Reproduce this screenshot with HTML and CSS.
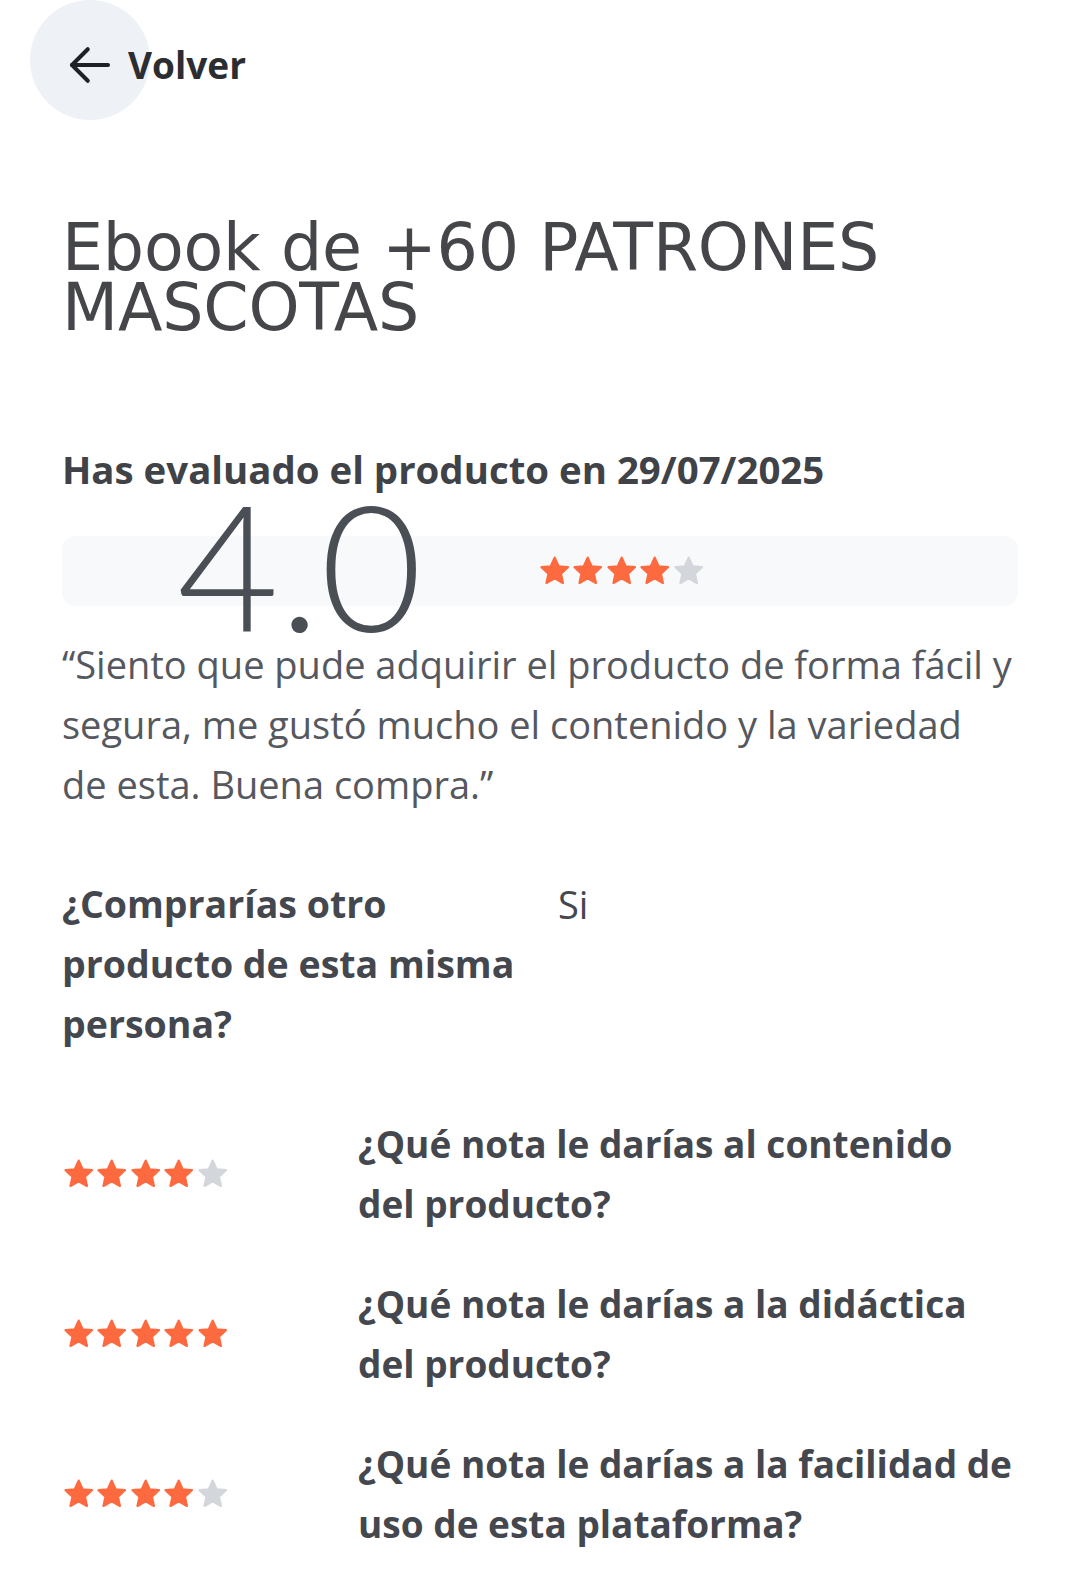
FILE: index.html
```html
<!DOCTYPE html>
<html lang="es">
<head>
<meta charset="utf-8">
<link rel="stylesheet" href="styles.css">
</head>
<body>
<div class="page">
  <a class="back" href="#">
    <span class="back-icon">
      <svg width="54" height="54" viewBox="0 0 24 24" fill="none" stroke="#1f2125" stroke-width="1.8" stroke-linecap="round" stroke-linejoin="round"><path d="M20 12H4"/><path d="M11 5l-7 7 7 7"/></svg>
    </span>
    <span class="back-label">Volver</span>
  </a>

  <h1 class="title">Ebook de +60 PATRONES MASCOTAS</h1>

  <h2 class="eval-date">Has evaluado el producto en 29/07/2025</h2>

  <div class="score-row">
    <div class="score-band"></div>
    <div class="score">4.0</div>
    <div class="stars stars-big" data-n="4"></div>
  </div>

  <p class="quote">“Siento que pude adquirir el producto de forma fácil y segura, me gustó mucho el contenido y la variedad<br>de esta. Buena compra.”</p>

  <div class="qa">
    <div class="qa-q">¿Comprarías otro producto de esta misma persona?</div>
    <div class="qa-a">Si</div>
  </div>

  <div class="rating">
    <div class="stars" data-n="4"></div>
    <div class="rating-q">¿Qué nota le darías al contenido<br>del producto?</div>
  </div>
  <div class="rating">
    <div class="stars" data-n="5"></div>
    <div class="rating-q">¿Qué nota le darías a la didáctica<br>del producto?</div>
  </div>
  <div class="rating">
    <div class="stars" data-n="4"></div>
    <div class="rating-q">¿Qué nota le darías a la facilidad de<br>uso de esta plataforma?</div>
  </div>
</div>
<script>
document.querySelectorAll('.stars').forEach(function (el) {
  var n = parseInt(el.getAttribute('data-n'), 10);
  var html = '';
  for (var i = 0; i < 5; i++) {
    html += '<svg class="star ' + (i < n ? 'on' : 'off') + '" viewBox="0 0 24 24"><path d="M12 2.6l2.8 6.2 6.7.7-5 4.6 1.4 6.7L12 17.4l-5.9 3.4 1.4-6.7-5-4.6 6.7-.7z"/></svg>';
  }
  el.innerHTML = html;
});
</script>
</body>
</html>
```

FILE: styles.css
```css
* { box-sizing: border-box; }
html, body { margin: 0; padding: 0; background: #ffffff; }
body {
  font-family: "Open Sans", "Lato", sans-serif;
  color: #44474d;
}
.page {
  padding: 0 62px 0 62px;
}
.back {
  position: relative;
  display: flex;
  align-items: center;
  height: 120px;
  margin-left: -32px;
  text-decoration: none;
  color: #2b2d31;
  width: max-content;
}
.back-icon {
  width: 120px;
  height: 120px;
  border-radius: 50%;
  background: #eef2f7;
  display: flex;
  align-items: center;
  justify-content: center;
  padding-top: 10px;
}
.back-label {
  position: relative;
  margin-left: -22px;
  padding-top: 8px;
  font-size: 37px;
  font-weight: 700;
}
.title {
  margin: 98px 0 0;
  font-family: "DejaVu Sans", sans-serif;
  font-weight: 400;
  font-size: 65px;
  line-height: 60px;
  color: #45464a;
  letter-spacing: -0.2px;
}
.eval-date {
  margin: 106px 0 0;
  font-size: 38.4px;
  font-weight: 700;
  line-height: 50px;
  color: #3f4247;
}
.score-row {
  position: relative;
  display: flex;
  align-items: center;
  height: 140px;
}
.score-band {
  position: absolute;
  left: 0;
  right: 0;
  top: 42px;
  height: 70px;
  background: #f8f9fb;
  border-radius: 14px;
}
.score {
  position: relative;
  width: 476px;
  padding-left: 115px;
  font-family: "Lato", sans-serif;
  font-size: 176px;
  font-weight: 300;
  line-height: 140px;
  color: #4a4e55;
}
.stars {
  display: flex;
}
.stars-big {
  position: relative;
  margin-top: 14px;
}
.star {
  width: 33.4px;
  height: 33.4px;
  stroke-width: 1.6;
  stroke-linejoin: round;
}
.star.on { fill: #fe6a3f; stroke: #fe6a3f; }
.star.off { fill: #d3d6db; stroke: #d3d6db; }
.quote {
  margin: 0;
  font-size: 38px;
  line-height: 60px;
  color: #55585e;
}
.qa {
  display: flex;
  margin-top: 60px;
}
.qa-q {
  width: 496px;
  font-size: 37.5px;
  font-weight: 700;
  line-height: 60px;
  color: #44474d;
}
.qa-a {
  font-size: 38px;
  line-height: 60px;
  color: #44474d;
}
.rating {
  display: flex;
  align-items: center;
  margin-top: 40px;
}
.qa + .rating { margin-top: 60px; }
.rating .stars {
  width: 296px;
  flex: none;
}
.rating-q {
  font-size: 37px;
  font-weight: 700;
  line-height: 60px;
  color: #44474d;
  white-space: nowrap;
}
```
